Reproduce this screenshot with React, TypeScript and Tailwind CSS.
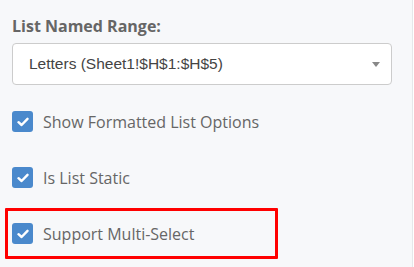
import React from 'react';

function Check({ label }: { label: string }) {
  return (
    <label className="flex h-[21px] items-center gap-[10px]">
      <span className="flex h-[21px] w-[21px] items-center justify-center rounded-[3px] bg-[#4a89cc]">
        <svg width="12" height="10" viewBox="0 0 12 10">
          <path d="M1.5 5.2 L4.6 8 L10.5 1.8" fill="none" stroke="#fff" strokeWidth="2.4" strokeLinecap="round" strokeLinejoin="round" />
        </svg>
      </span>
      <span className="text-[16px] leading-none text-[#666]">{label}</span>
    </label>
  );
}

export default function App() {
  return (
    <div className="flex h-[267px] w-[414px] bg-[#f7f8fa] font-['Open_Sans',sans-serif]">
      <div className="flex-1 border-r border-[#e6e7ea] pt-[15px] pl-[12px] pr-[20px]">
        <div className="text-[16px] font-bold leading-[22px] text-[#666]">List Named Range:</div>
        <div className="mt-[6px] flex h-[42px] w-[380px] items-center justify-between rounded-[4px] border border-[#ccc] bg-white pl-[16px] pr-[11px]">
          <span className="font-['Liberation_Sans',Arial,sans-serif] text-[15.5px] text-[#444]">Letters (Sheet1!$H$1:$H$5)</span>
          <svg width="8" height="5" viewBox="0 0 8 5">
            <path d="M0 0 H8 L4 5 Z" fill="#888" />
          </svg>
        </div>
        <div className="mt-[26px] flex flex-col">
          <Check label="Show Formatted List Options" />
          <div className="mt-[35px]">
            <Check label="Is List Static" />
          </div>
          <div className="mt-[20px] -ml-[7px] flex h-[51px] w-[273px] items-center rounded-[1px] border-[3px] border-[#ff0000] pl-[4px]">
            <Check label="Support Multi-Select" />
          </div>
        </div>
      </div>
      <div className="w-[1px] bg-white" />
    </div>
  );
}
